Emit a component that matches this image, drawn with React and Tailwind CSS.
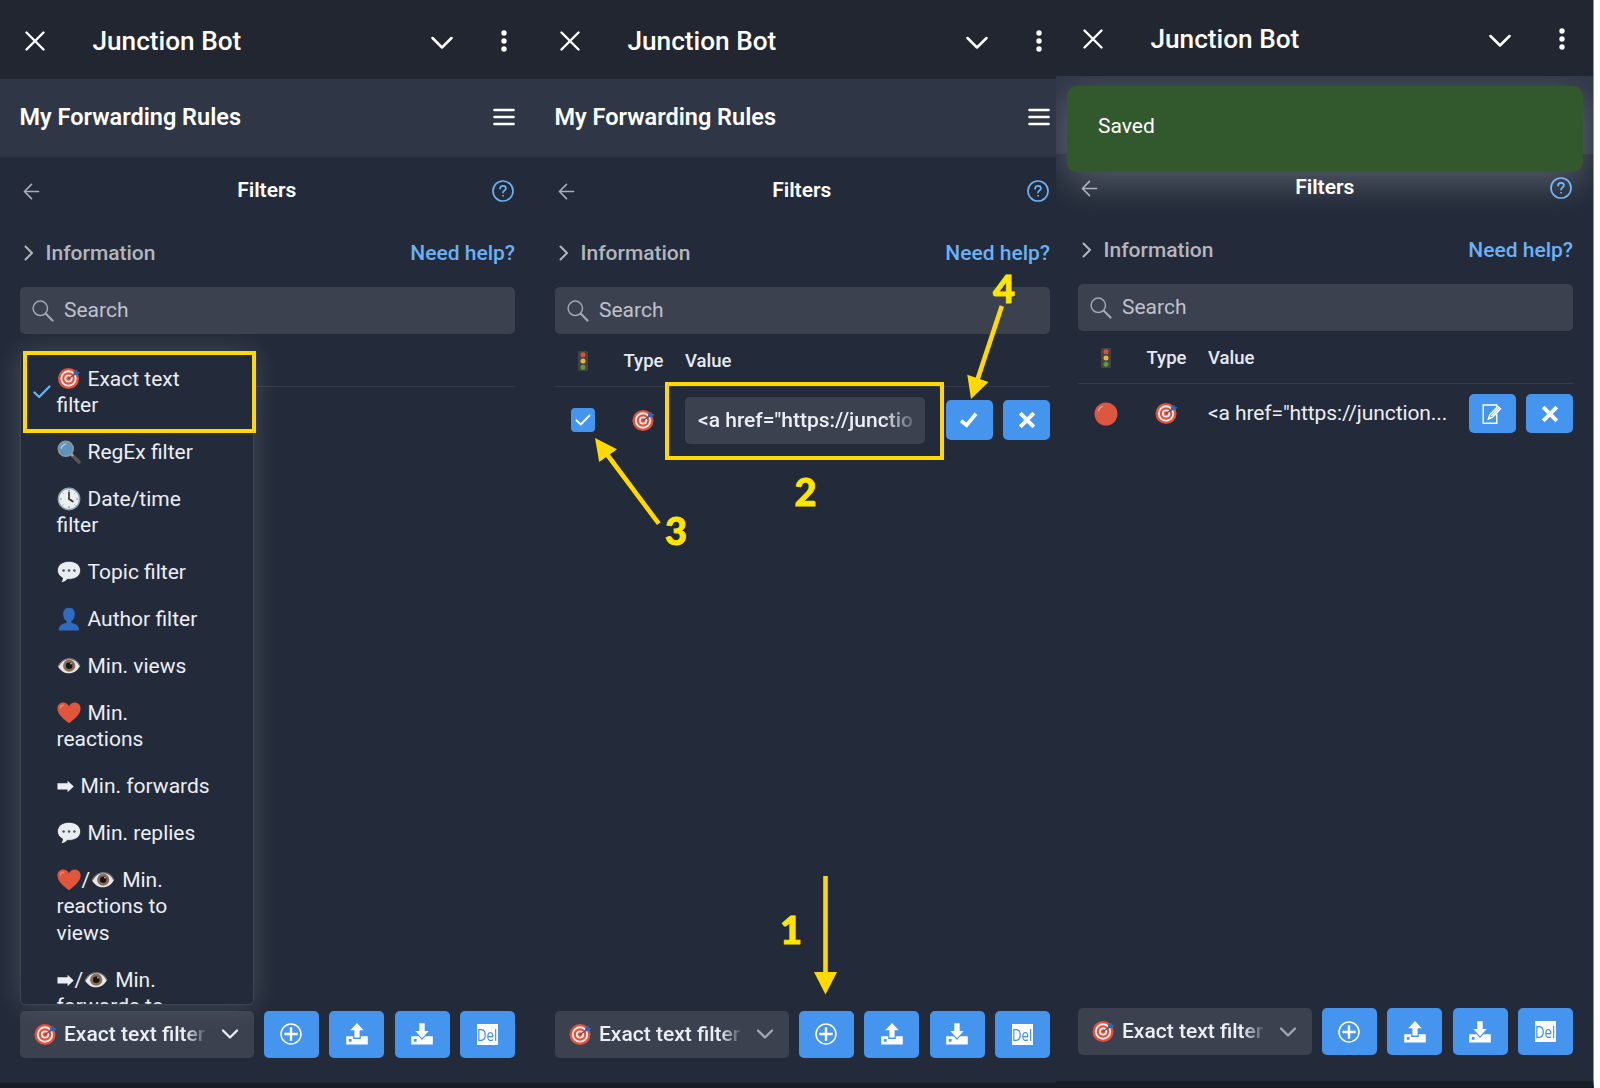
import clsx from "clsx";

/* ---------- emoji ---------- */

function Target({ className }) {
  return (
    <svg viewBox="0 0 24 24" className={clsx("h-[23px] shrink-0", className || "w-[23px]")}>
      <circle cx="11.5" cy="12" r="11" fill="#e0503a" />
      <circle cx="11.5" cy="12" r="8.500" fill="#f6eeec" />
      <circle cx="11.5" cy="12" r="6.500" fill="#e0503a" />
      <circle cx="11.5" cy="12" r="4.300" fill="#f6eeec" />
      <circle cx="11.5" cy="12" r="2.300" fill="#e0503a" />
      <path d="M11.5 12 18 7.6" stroke="#5b4a5c" strokeWidth="1.3" />
      <path d="M16.400 8.600 17 4.600 20.400 2.800 20.600 5 23.500 5.600 20.800 8.600Z" fill="#2f67b4" />
    </svg>
  );
}

function Magnifier() {
  return (
    <svg viewBox="0 0 24 24" className="h-6 w-6">
      <path d="m15 15 7 7" stroke="#5d5653" strokeWidth="3.4" strokeLinecap="round" />
      <path d="m13.5 13.5 2.5 2.5" stroke="#a9a9a9" strokeWidth="2.4" />
      <circle cx="8.8" cy="8.8" r="7.4" fill="#5d94bd" stroke="#8b969e" strokeWidth="1.7" />
      <path d="M4.5 8.2a4.6 4.6 0 0 1 4-4" fill="none" stroke="#a9cbe2" strokeWidth="1.5" strokeLinecap="round" />
    </svg>
  );
}

function Clock() {
  return (
    <svg viewBox="0 0 24 24" className="h-6 w-6">
      <circle cx="12" cy="12" r="10.7" fill="#eceff1" stroke="#8fa3ae" strokeWidth="1.4" />
      <g stroke="#7d868b" strokeWidth="1.2">
        <path d="M12 2.8v2M12 19.2v2M2.8 12h2M19.2 12h2" />
        <path d="m5.5 5.5 1 1M17.5 17.5l1 1M5.5 18.5l1-1M17.5 6.5l1-1" strokeWidth=".8" />
      </g>
      <path d="M12 5.5V12l3.8 2.5" fill="none" stroke="#2b2b2b" strokeWidth="1.6" strokeLinecap="round" />
    </svg>
  );
}

function Balloon() {
  return (
    <svg viewBox="0 0 24 24" className="h-6 w-6">
      <path
        d="M12 1.300C5.400 1.300.4 5 .4 10.400c0 3.300 2 5.900 5 7.400.1 1.900-.4 3.400-1.700 4.800 3 0 5.400-1.300 6.700-3.300l1.600.1c6.600 0 11.600-3.700 11.600-9S18.600 1.300 12 1.300Z"
        fill="#e9ecf2"
        stroke="#15171c"
        strokeWidth=".7"
      />
      <g fill="#4d5663">
        <circle cx="6.600" cy="10.500" r="1.300" />
        <circle cx="12" cy="10.500" r="1.300" />
        <circle cx="17.400" cy="10.500" r="1.300" />
      </g>
    </svg>
  );
}

function Person() {
  return (
    <svg viewBox="0 0 24 24" className="h-6 w-6">
      <path
        d="M12 .8c-4 0-6 2.900-5.800 6.600.1 2.900 1.500 5.600 3.300 6.700v1.800c-4 .8-7.700 2.300-7.700 7.600h20.400c0-5.300-3.700-6.800-7.700-7.600v-1.800c1.800-1.100 3.200-3.800 3.300-6.700C18 3.700 16 .8 12 .8Z"
        fill="#2f6bc1"
      />
    </svg>
  );
}

function Eye() {
  return (
    <svg viewBox="0 0 24 24" className="h-6 w-6">
      <path d="M1 12.500C4 7 8 4.700 12.500 4.700S20.500 7 23 12c-2.800 5-6.500 7.300-11 7.300S4 17.300 1 12.500Z" fill="#e8e6e6" />
      <path d="M1 12.500C4 7 8 4.700 12.500 4.700S20.500 7 23 12" fill="none" stroke="#6b6c74" strokeWidth="1.300" />
      <circle cx="12.200" cy="11.700" r="6.100" fill="#8a6b56" />
      <circle cx="12.200" cy="11.700" r="3.300" fill="#15151a" />
      <circle cx="14" cy="9.800" r=".8" fill="#d9d4d0" />
    </svg>
  );
}

function HeartEmoji() {
  return (
    <svg viewBox="0 0 24 24" className="h-6 w-6">
      <path
        d="M12 22.300C7.500 18.600.4 13.500.4 7.400.4 3.700 3.100 1.500 6.200 1.500c2.600 0 4.700 1.400 5.800 3.700 1.100-2.300 3.200-3.700 5.800-3.700 3.100 0 5.800 2.200 5.800 5.900 0 6.100-7.100 11.200-11.600 14.900Z"
        fill="#e0563c"
      />
      <path d="M3.600 6.700c.2-1.500 1.200-2.400 2.500-2.500" fill="none" stroke="#ef8b74" strokeWidth="1.500" strokeLinecap="round" />
    </svg>
  );
}

function ArrowGlyph() {
  return (
    <svg viewBox="0 0 18 24" className="h-6 w-[17px]">
      <path d="M.5 9.200h10.700V6.500l6.500 6-6.500 6v-2.700H.5Z" fill="#eceef6" />
    </svg>
  );
}

function TrafficLight() {
  return (
    <svg viewBox="0 0 12 22" className="h-[22px] w-3">
      <rect x="1" y="1" width="10" height="20" rx="1.500" fill="#43443f" />
      <circle cx="6" cy="4.800" r="2.500" fill="#d9503a" />
      <circle cx="6" cy="11" r="2.500" fill="#eab33f" />
      <circle cx="6" cy="17.200" r="2.500" fill="#5b9a45" />
    </svg>
  );
}

function RedCircle() {
  return (
    <svg viewBox="0 0 24 24" className="h-6 w-6">
      <circle cx="12" cy="12" r="11.500" fill="#dd5740" />
      <path d="M4.300 8.700c.8-2 2.200-3.500 4-4.300" fill="none" stroke="#ee9a86" strokeWidth="1.400" strokeLinecap="round" />
    </svg>
  );
}

/* ---------- ui icons ---------- */

function Stroke({ d, box, className, width = 2 }) {
  return (
    <svg viewBox={box} className={clsx("shrink-0", className)} fill="none" stroke="currentColor" strokeWidth={width} strokeLinecap="round" strokeLinejoin="round">
      <path d={d} />
    </svg>
  );
}

function HelpIcon() {
  return (
    <svg viewBox="0 0 22 22" className="h-[22px] w-[22px] text-[#6cb0f5]" fill="none" stroke="currentColor" strokeWidth="1.700" strokeLinecap="round">
      <circle cx="11" cy="11" r="10" />
      <path d="M8.100 8.700c0-1.800 1.200-2.900 2.900-2.900s2.900 1.100 2.900 2.600c0 2-2.900 2.100-2.900 4.200" />
      <circle cx="11" cy="15.800" r=".4" fill="currentColor" strokeWidth="1" />
    </svg>
  );
}

function CloseMark() {
  return (
    <svg viewBox="0 0 18 18" className="h-[18px] w-[18px]" fill="none" stroke="#fff" strokeWidth="3.900">
      <path d="M2.200 2.200 15.800 15.800M15.800 2.200 2.200 15.800" />
    </svg>
  );
}

function CheckMark() {
  return (
    <svg viewBox="0 0 20 16" className="h-4 w-5" fill="none" stroke="#fff" strokeWidth="3.700">
      <path d="M2 8.800 7.600 13.200 17 1.800" />
    </svg>
  );
}

function AddIcon() {
  return (
    <svg viewBox="0 0 22 22" className="h-[22px] w-[22px]" fill="none" stroke="#fff">
      <circle cx="11" cy="11" r="10" strokeWidth="1.500" />
      <path d="M11 4.300v13.400M4.300 11h13.400" strokeWidth="2.400" />
    </svg>
  );
}

function UploadIcon() {
  return (
    <svg viewBox="0 0 22 22" className="h-[22px] w-[22px]" fill="#fff">
      <path d="M11 0 17.700 7.300H13.600V14.600H8.400V7.300H4.300Z" />
      <path fillRule="evenodd" d="M.2 13.300H7.200V15.900H14.800V13.300H21.800V21.500H.2ZM2.800 16v2.800h2.800V16Z" />
    </svg>
  );
}

function DownloadIcon() {
  return (
    <svg viewBox="0 0 22 22" className="h-[22px] w-[22px]" fill="#fff">
      <path d="M8.300.2h5.400V8h4L11 15.200 4.300 8h4Z" />
      <path fillRule="evenodd" d="M.2 13.300H7.600L11 16.900 14.400 13.300H21.800V21.500H.2ZM2.800 16v2.800h2.800V16Z" />
    </svg>
  );
}

function DelIcon() {
  return (
    <span className="flex h-[21px] w-[21px] items-center justify-center overflow-hidden bg-white">
      <span className="scale-x-[0.78] font-['Open_Sans'] text-[17px] leading-none text-[#3f8de6]">Del</span>
    </span>
  );
}

function EditIcon() {
  return (
    <svg viewBox="0 0 20 20" className="h-5 w-5" fill="none" stroke="#fff">
      <path d="M14.800 10v9.200H1.200V1h13.600v2" strokeWidth="1.400" />
      <path d="m6.400 15 1.300-4.200L15.700 2.500l2.800 2.300-8 8.500Z" strokeWidth="1.400" fill="#4595ef" />
      <path d="m9.200 12 7.600-8" strokeWidth="1.500" />
      <path d="m6.400 15 1-2.800 1.500 1.600Z" fill="#fff" />
    </svg>
  );
}

/* ---------- shared pieces ---------- */

function BlueButton({ className, children }) {
  return (
    <button type="button" className={clsx("flex shrink-0 items-center justify-center rounded-[5px] bg-[#4595ef] text-white", className)}>
      {children}
    </button>
  );
}

function FilterSelect({ active, children }) {
  return (
    <div className="relative h-[47px] w-[234px] shrink-0">
      <div className="flex h-full w-full items-center rounded-[5px] bg-[#3c414f] pr-[15px] pl-[14.500px]">
        <Target />
        <span className="ml-[7px] w-[144px] overflow-hidden pt-px text-[21px] font-medium whitespace-nowrap text-[#eceef6] [mask-image:linear-gradient(to_right,#000_84%,transparent)]">
          Exact text filter
        </span>
        <Stroke box="0 0 18 12" d="M2 2.500 9 9.500 16 2.500" width={2.3} className={clsx("ml-auto h-3 w-[18px]", active ? "text-[#eceef6]" : "text-[#a3a8b3]")} />
      </div>
      {children}
    </div>
  );
}

function TableHead() {
  return (
    <div className="flex h-[52.500px] shrink-0 items-center border-b border-[#343c4b] pt-[3px] text-[18.500px] font-medium text-[#e6e9f2]">
      <span className="flex w-14 justify-center">
        <TrafficLight />
      </span>
      <span className="ml-px w-16 pt-0.5 text-center">Type</span>
      <span className="ml-[9.500px] pt-0.5">Value</span>
    </div>
  );
}

const actions = [
  { name: "add", icon: <AddIcon /> },
  { name: "upload", icon: <UploadIcon /> },
  { name: "download", icon: <DownloadIcon /> },
  { name: "delete", icon: <DelIcon /> },
];

function Panel({ headerClass, pad, menuOpen, menu, toast, footClass, children }) {
  return (
    <div className="flex h-full w-full flex-col bg-[#232b3a]">
      <header className={clsx("relative z-10 flex shrink-0 items-center bg-[#212630] pr-[28px] text-white", headerClass)}>
        <Stroke box="0 0 20 20" d="M1.500 1.500 18.500 18.500M18.500 1.500 1.500 18.500" width={2.4} className="h-5 w-5" />
        <h1 className="ml-12 pt-px text-[26.200px] font-medium">Junction Bot</h1>
        <Stroke box="0 0 22 14" d="M1.500 2 11 11.500 20.500 2" width={2.5} className="mt-[3px] ml-auto h-[14px] w-[22px]" />
        <svg viewBox="0 0 6 22" className="ml-12 h-[22px] w-1.5 fill-white">
          <circle cx="3" cy="3" r="2.700" />
          <circle cx="3" cy="11" r="2.700" />
          <circle cx="3" cy="19" r="2.700" />
        </svg>
      </header>

      <div className="relative flex min-h-0 flex-1 flex-col">
        <div className={clsx("flex h-[78px] shrink-0 items-center justify-between bg-[#2f3747]", pad)}>
          <h2 className="text-[23.500px] font-semibold text-white">My Forwarding Rules</h2>
          <Stroke box="0 0 22 18" d="M1.500 2H20.500M1.500 9H20.500M1.500 16H20.500" width={2.6} className="mb-0.5 h-[18px] w-[22px] text-white" />
        </div>

        <div className={clsx("flex min-h-0 flex-1 flex-col", pad)}>
          <div className="flex h-[66px] shrink-0 items-center justify-between">
            <span className="flex w-[22px] pt-0.5 pl-[3px]">
              <Stroke box="0 0 18 18" d="M16.500 9H1.500M9 1.500 1.500 9 9 16.500" width={1.7} className="h-[17px] w-[17px] text-[#a9adb6]" />
            </span>
            <h3 className="pt-0.5 text-[21px] font-semibold text-white">Filters</h3>
            <span className="pt-0.5 pr-px">
              <HelpIcon />
            </span>
          </div>
          <div className="mb-[6px] flex h-[58px] shrink-0 items-center pt-0.5 text-[21px]">
            <Stroke box="0 0 10 16" d="M1.500 1.500 8 8 1.500 14.500" width={2} className="mr-3 ml-1 h-4 w-[10px] text-[#b3b6be]" />
            <span className="pt-px font-medium text-[#b3b6be]">Information</span>
            <a href="#help" className="ml-auto pt-px font-medium text-[#6cb0f5]">Need help?</a>
          </div>
          <div className="flex h-[47px] shrink-0 items-center rounded-[5px] bg-[#3c414f] pl-3">
            <svg viewBox="0 0 22 22" className="h-[22px] w-[22px] text-[#a3a7b1]" fill="none" stroke="currentColor" strokeLinecap="round">
              <circle cx="8.300" cy="8.300" r="7.200" strokeWidth="1.500" />
              <path d="m13.800 13.800 6.700 6.700" strokeWidth="2.300" />
            </svg>
            <span className="ml-[10.500px] text-[21px] text-[#bfc2cc]">Search</span>
          </div>
          <TableHead />
          {children}
          <div className={clsx("mt-auto flex justify-between", footClass)}>
            <FilterSelect active={menuOpen}>{menu}</FilterSelect>
            {actions.map((action) => (
              <BlueButton key={action.name} className="h-[47px] w-[55px]">
                {action.icon}
              </BlueButton>
            ))}
          </div>
        </div>
        {toast}
      </div>
    </div>
  );
}

/* ---------- filter type menu ---------- */

const filterTypes = [
  { icons: [<Target key="t" className="w-6" />], lines: ["Exact text", "filter"], checked: true },
  { icons: [<Magnifier key="m" />], lines: ["RegEx filter"] },
  { icons: [<Clock key="c" />], lines: ["Date/time", "filter"] },
  { icons: [<Balloon key="b" />], lines: ["Topic filter"] },
  { icons: [<Person key="p" />], lines: ["Author filter"] },
  { icons: [<Eye key="e" />], lines: ["Min. views"] },
  { icons: [<HeartEmoji key="h" />], lines: ["Min.", "reactions"] },
  { icons: [<ArrowGlyph key="a" />], lines: ["Min. forwards"] },
  { icons: [<Balloon key="b" />], lines: ["Min. replies"] },
  { icons: [<HeartEmoji key="h" />, <Eye key="e" />], lines: ["Min.", "reactions to", "views"] },
  { icons: [<ArrowGlyph key="a" />, <Eye key="e" />], lines: ["Min.", "forwards to", "views"] },
];

function FilterMenu() {
  return (
    <div className="absolute bottom-[53px] left-0 h-[653px] w-[234px] rounded-[5px] border border-[#3d4452] bg-[#232b3a] shadow-[0_0_28px_rgba(255,255,255,0.15)]">
      <ul className="h-full overflow-hidden pt-[3px] text-[21px] leading-[26.200px] text-[#eceef6]">
        {filterTypes.map((type, index) => (
          <li key={index} className="flex items-center py-[10.400px] pl-3">
            <span className="w-[24px] shrink-0">
              {type.checked && <Stroke box="0 0 18 14" d="M1.500 7.500 6.200 12 16.500 1.500" width={2.3} className="h-[14px] w-[18px] text-[#6cb0f5]" />}
            </span>
            <div>
              {type.lines.map((line, i) => (
                <div key={line} className="flex h-[26.200px] items-center whitespace-nowrap">
                  {i === 0 && (
                    <span className="mr-[7px] flex items-center">
                      {type.icons[0]}
                      {type.icons[1] && <span className="px-px">/</span>}
                      {type.icons[1]}
                    </span>
                  )}
                  {line}
                </div>
              ))}
            </div>
          </li>
        ))}
      </ul>
    </div>
  );
}

/* ---------- tutorial marks ---------- */

const steps = [
  { n: "1", place: "top-[907px] left-[780px]" },
  { n: "2", place: "top-[469px] left-[794.500px]" },
  { n: "3", place: "top-[508px] left-[665px]" },
  { n: "4", place: "top-[266px] left-[993px]" },
];

function Annotations() {
  return (
    <div className="pointer-events-none absolute inset-0 z-20">
      <div className="absolute top-[350.500px] left-[22.500px] h-[82px] w-[233px] border-4 border-[#ffd900]" />
      <div className="absolute top-[381.500px] left-[664.500px] h-[78px] w-[279px] border-4 border-[#ffd900]" />
      <svg viewBox="0 0 1600 1088" className="absolute inset-0 h-full w-full" fill="#ffd900" stroke="#ffd900">
        <g strokeWidth="4.600">
          <path d="M825.500 876V975" />
          <path d="M658.800 523.700 606 453" />
          <path d="M1001.800 306 977 381" />
        </g>
        <g stroke="none">
          <path d="M814 972h23l-11.500 22.500Z" />
          <path d="M595 438 617 449.300 599.200 462Z" />
          <path d="M971 399 967.300 374.700 988.500 382Z" />
        </g>
      </svg>
      {steps.map((step) => (
        <span
          key={step.n}
          className={clsx(
            "absolute font-['Lato'] text-[38px] leading-[44px] font-black text-[#ffe600] [-webkit-text-stroke:0.9px_#ffe600] [text-shadow:1px_1px_1px_rgba(0,0,0,0.6)]",
            step.place
          )}
        >
          {step.n}
        </span>
      ))}
    </div>
  );
}

export default function App() {
  return (
    <div className="relative flex h-[1088px] w-[1600px] overflow-hidden bg-white font-['Roboto',sans-serif]">
      <section className="w-[535px] shrink-0 border-b-[5px] border-[#181c25]">
        <Panel headerClass="h-[79px] pt-[3px] pl-[24.500px]" pad="pr-5 pl-[19.500px]" footClass="mb-[25.500px]" menuOpen menu={<FilterMenu />} />
      </section>

      <section className="w-[521px] shrink-0 overflow-hidden border-b-[5px] border-[#181c25]">
        <div className="h-full w-[535px]">
          <Panel headerClass="h-[79px] pt-[3px] pl-[24.500px]" pad="pr-5 pl-[19.500px]" footClass="mb-[25.500px]">
            <div className="flex h-[67px] items-center">
              <span className="flex w-14 justify-center">
                <span className="flex h-6 w-6 items-center justify-center rounded-[4px] bg-[#4595ef]">
                  <Stroke box="0 0 16 12" d="M1.500 6.300 5.700 10.500 14.500 1.500" width={1.9} className="h-3 w-4 text-white" />
                </span>
              </span>
              <span className="ml-px flex w-16 justify-center">
                <Target />
              </span>
              <div className="ml-[9.500px] h-[47px] w-[240px] rounded-[5px] bg-[#3c414f] px-[13px]">
                <div className="overflow-hidden text-[21px] leading-[46px] font-medium whitespace-nowrap text-[#eceef6] [mask-image:linear-gradient(to_right,#000_86%,transparent_104%)]">
                  {'<a href="https://junction.bot">'}
                </div>
              </div>
              <BlueButton className="ml-auto h-10 w-[47px]">
                <CheckMark />
              </BlueButton>
              <BlueButton className="ml-[10.500px] h-10 w-[47px]">
                <CloseMark />
              </BlueButton>
            </div>
          </Panel>
        </div>
      </section>

      <section className="w-[538px] shrink-0 overflow-hidden border-r border-b-[7px] border-r-[#8d929b] border-b-[#181c25]">
        <Panel
          headerClass="h-[76px] pt-[2.500px] pl-[26.500px]"
          pad="pr-5 pl-[21.500px]"
          footClass="mb-[26px]"
          toast={
            <div className="absolute top-[10px] right-[10px] left-[11px] h-[86px] rounded-[10px] bg-[#32592d] px-[31px] pt-[25px] text-[21px] leading-[30px] text-white shadow-[0_10px_36px_rgba(255,255,255,0.24)]">
              Saved
            </div>
          }
        >
          <div className="flex h-[60px] items-center">
            <span className="flex w-14 justify-center">
              <RedCircle />
            </span>
            <span className="ml-px flex w-16 justify-center">
              <Target />
            </span>
            <span className="ml-[9.500px] text-[21px] tracking-[-0.1px] text-[#eceef6]">{'<a href="https://junction...'}</span>
            <BlueButton className="ml-auto h-[39px] w-[47px]">
              <EditIcon />
            </BlueButton>
            <BlueButton className="ml-[10.500px] h-[39px] w-[47px]">
              <CloseMark />
            </BlueButton>
          </div>
        </Panel>
      </section>

      <Annotations />
    </div>
  );
}
